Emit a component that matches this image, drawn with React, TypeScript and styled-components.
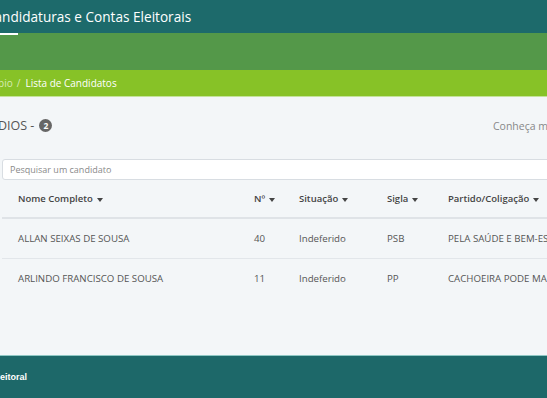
import React from 'react';
import styled, { createGlobalStyle } from 'styled-components';

const GlobalStyle = createGlobalStyle`
  html, body {
    margin: 0;
    padding: 0;
    background: #f3f6f8;
    font-family: "Open Sans", "Noto Sans", sans-serif;
  }
`;

const Page = styled.div`
  width: 547px;
  height: 398px;
  overflow: hidden;
  display: flex;
  flex-direction: column;
  background: #f3f6f8;
`;

const TopBar = styled.header`
  height: 33px;
  background: #1d6a6b;
  display: flex;
  align-items: center;
  flex-shrink: 0;
`;

// pushes the first part of a band off the left edge, as in the scrolled page
const Cut = styled.div<{ $cut: number }>`
  margin-left: ${p => -p.$cut}px;
  white-space: nowrap;
  display: flex;
  align-items: center;
`;

const Title = styled.h1`
  margin: 0;
  font-size: 13.6px;
  font-weight: 400;
  color: #fff;
`;

const NavBand = styled.nav`
  height: 37px;
  background: #549849;
  flex-shrink: 0;
`;

const ActiveTab = styled.div`
  width: 18px;
  height: 2px;
  background: #fff;
`;

const Crumbs = styled.div`
  height: 26px;
  background: #87c227;
  border-bottom: 1px solid #c4e39a;
  display: flex;
  align-items: center;
  font-size: 10px;
  flex-shrink: 0;
`;

const Crumb = styled.span<{ $current?: boolean }>`
  color: ${p => (p.$current ? '#fff' : '#d9ecb3')};
`;

const Sep = styled.span`
  color: #d9ecb3;
  margin: 0 5px 0 4px;
`;

const Main = styled.main`
  flex: 1;
  padding-top: 18px;
`;

const HeadRow = styled.div`
  display: grid;
  grid-template-columns: 493px auto;
  align-items: center;
  height: 21px;
`;

const Heading = styled.h2`
  margin: 0;
  font-size: 12.5px;
  font-weight: 400;
  color: #555;
  display: flex;
  align-items: center;
  gap: 5px;
`;

const Badge = styled.span`
  display: inline-flex;
  align-items: center;
  justify-content: center;
  width: 13px;
  height: 13px;
  border-radius: 7px;
  background: #666;
  color: #fff;
  font-size: 8.5px;
  font-weight: 700;
`;

const MoreLink = styled.a`
  font-size: 10.5px;
  color: #888;
  white-space: nowrap;
`;

const Search = styled.input`
  display: block;
  margin: 23px 0 0 2px;
  width: 600px;
  height: 21px;
  box-sizing: border-box;
  border: 1px solid #d8dde2;
  border-radius: 3px;
  background: #fff;
  padding: 0 7px;
  font-family: inherit;
  font-size: 9px;
  color: #555;
  &::placeholder {
    color: #8a8a8a;
  }
`;

const Table = styled.div`
  margin-left: 2px;
  width: 700px;
`;

const Row = styled.div<{ $head?: boolean }>`
  display: grid;
  grid-template-columns: 236px 45px 88px 61px 1fr;
  align-items: center;
  height: ${p => (p.$head ? '37px' : '39px')};
  border-bottom: ${p => (p.$head ? '2px solid #dfe3e7' : '1px solid #e2e6ea')};
  &:last-child {
    border-bottom: none;
  }
`;

const Cell = styled.div<{ $head?: boolean }>`
  padding-left: 16px;
  white-space: nowrap;
  font-size: ${p => (p.$head ? '9.5px' : '9.7px')};
  font-weight: ${p => (p.$head ? 600 : 400)};
  color: ${p => (p.$head ? '#444' : '#555')};
  display: flex;
  align-items: center;
`;

const Caret = styled.span`
  display: inline-block;
  margin-left: 4px;
  margin-top: 2px;
  border-left: 3.5px solid transparent;
  border-right: 3.5px solid transparent;
  border-top: 4px solid #444;
`;

const Footer = styled.footer`
  height: 42px;
  background: #1d6869;
  border-top: 1px solid #8fc7c4;
  display: flex;
  align-items: center;
  flex-shrink: 0;
`;

const FooterText = styled.span`
  font-family: "Liberation Sans", Arial, sans-serif;
  font-weight: 700;
  font-size: 9px;
  color: #fff;
`;

const columns = ['Nome Completo', 'Nº', 'Situação', 'Sigla', 'Partido/Coligação'];

const candidates = [
  { nome: 'ALLAN SEIXAS DE SOUSA', numero: '40', situacao: 'Indeferido', sigla: 'PSB', partido: 'PELA SAÚDE E BEM-ESTAR DE CACHOEIRA' },
  { nome: 'ARLINDO FRANCISCO DE SOUSA', numero: '11', situacao: 'Indeferido', sigla: 'PP', partido: 'CACHOEIRA PODE MAIS' },
];

export default function App() {
  return (
    <Page>
      <GlobalStyle />
      <TopBar>
        <Cut $cut={14}>
          <Title>Candidaturas e Contas Eleitorais</Title>
        </Cut>
      </TopBar>
      <NavBand>
        <ActiveTab />
      </NavBand>
      <Crumbs>
        <Cut $cut={33}>
          <Crumb>Município</Crumb>
          <Sep>/</Sep>
          <Crumb $current>Lista de Candidatos</Crumb>
        </Cut>
      </Crumbs>
      <Main>
        <HeadRow>
          <Cut $cut={15}>
            <Heading>
              ÍNDIOS - <Badge>2</Badge>
            </Heading>
          </Cut>
          <MoreLink>Conheça mais sobre as eleições</MoreLink>
        </HeadRow>
        <Search placeholder="Pesquisar um candidato" />
        <Table>
          <Row $head>
            {columns.map(c => (
              <Cell $head key={c}>
                {c}
                <Caret />
              </Cell>
            ))}
          </Row>
          {candidates.map(c => (
            <Row key={c.numero}>
              <Cell>{c.nome}</Cell>
              <Cell>{c.numero}</Cell>
              <Cell>{c.situacao}</Cell>
              <Cell>{c.sigla}</Cell>
              <Cell>{c.partido}</Cell>
            </Row>
          ))}
        </Table>
      </Main>
      <Footer>
        <Cut $cut={42}>
          <FooterText>Justiça Eleitoral</FooterText>
        </Cut>
      </Footer>
    </Page>
  );
}
